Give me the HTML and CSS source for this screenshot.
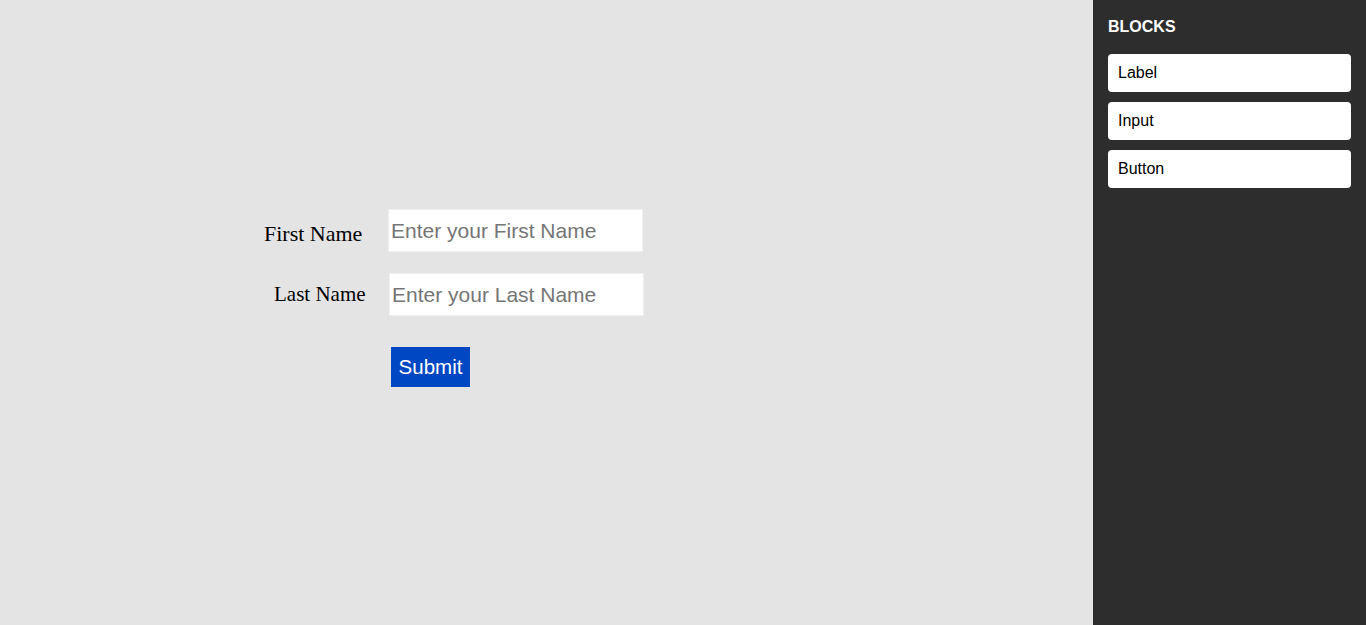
FILE: index.html
```html
<!DOCTYPE html>
<html>
<head>
<meta charset="utf-8">
<link rel="stylesheet" href="styles.css">
</head>
<body>
<div class="app">
  <main class="canvas">
    <label class="lbl lbl-first">First Name</label>
    <input class="field field-first" type="text" placeholder="Enter your First Name">
    <label class="lbl lbl-last">Last Name</label>
    <input class="field field-last" type="text" placeholder="Enter your Last Name">
    <button class="submit">Submit</button>
  </main>
  <aside class="sidebar">
    <h3 class="sidebar-title">BLOCKS</h3>
    <div class="block">Label</div>
    <div class="block">Input</div>
    <div class="block">Button</div>
  </aside>
</div>
</body>
</html>
```
FILE: styles.css
```css
html, body {
  margin: 0;
  padding: 0;
  height: 100%;
}
.app {
  display: flex;
  height: 625px;
}
.canvas {
  flex: 1;
  position: relative;
  background: #e4e4e4;
}
.lbl {
  position: absolute;
  font-family: "Liberation Serif", "Times New Roman", serif;
  color: #000;
  white-space: nowrap;
}
.lbl-first {
  left: 264px;
  top: 223px;
  font-size: 22px;
  line-height: 22px;
}
.lbl-last {
  left: 274px;
  top: 284px;
  font-size: 21px;
  line-height: 21px;
}
.field {
  position: absolute;
  box-sizing: border-box;
  width: 255px;
  height: 43px;
  margin: 0;
  padding: 0 2px;
  border: 1px solid #efefef;
  background: #fff;
  font-family: "Liberation Sans", Arial, sans-serif;
  font-size: 21px;
  color: #000;
  outline: none;
}
.field::placeholder {
  color: #757575;
}
.field-first {
  left: 388px;
  top: 209px;
}
.field-last {
  left: 389px;
  top: 273px;
}
.submit {
  position: absolute;
  left: 391px;
  top: 347px;
  box-sizing: border-box;
  width: 79px;
  height: 40px;
  margin: 0;
  padding: 0;
  border: none;
  background: #0047c4;
  color: #fff;
  font-family: "Liberation Sans", Arial, sans-serif;
  font-size: 20.5px;
}
.sidebar {
  width: 273px;
  box-sizing: border-box;
  padding: 16px 15px 15px;
  background: #2d2d2d;
  display: flex;
  flex-direction: column;
  gap: 10px;
  font-family: "Liberation Sans", Arial, sans-serif;
}
.sidebar-title {
  margin: 0 0 6px;
  color: #fff;
  font-size: 16px;
  font-weight: bold;
  line-height: 22px;
}
.block {
  height: 38px;
  box-sizing: border-box;
  padding: 0 10px;
  display: flex;
  align-items: center;
  background: #fff;
  border-radius: 4px;
  color: #000;
  font-size: 16px;
}
```
